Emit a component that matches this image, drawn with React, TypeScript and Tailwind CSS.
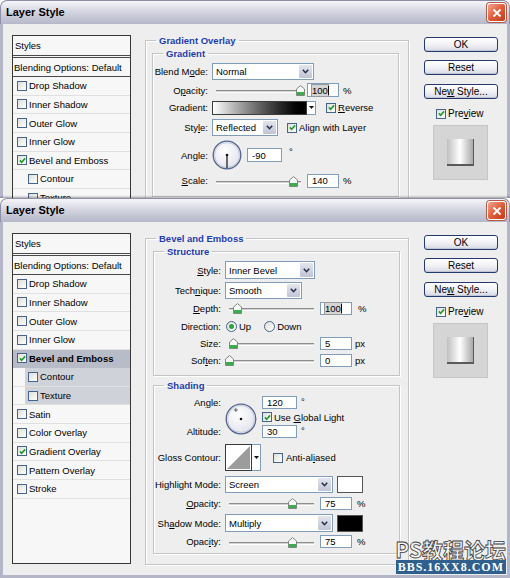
import { clsx } from 'clsx';
import type { ReactNode } from 'react';

const EFFECTS: { name: string; on?: boolean; sub?: boolean }[] = [
    { name: 'Drop Shadow' },
    { name: 'Inner Shadow' },
    { name: 'Outer Glow' },
    { name: 'Inner Glow' },
    { name: 'Bevel and Emboss', on: true },
    { name: 'Contour', sub: true },
    { name: 'Texture', sub: true },
    { name: 'Satin' },
    { name: 'Color Overlay' },
    { name: 'Gradient Overlay', on: true },
    { name: 'Pattern Overlay' },
    { name: 'Stroke' },
];

// label text with the keyboard accelerator underlined
function Acc({ text, at }: { text: string; at: number }) {
    return (
        <>
            {text.slice(0, at)}
            <span className="underline underline-offset-[1px]">{text[at]}</span>
            {text.slice(at + 1)}
        </>
    );
}

function Check({ on }: { on?: boolean }) {
    return (
        <span className="w-[10px] h-[10px] shrink-0 border border-[#46648a] bg-gradient-to-br from-[#dedfd8] to-white flex items-center justify-center">
            {on && (
                <svg viewBox="0 0 8 8" className="w-[7px] h-[7px]">
                    <path d="M1 3.9 L3 6 L7 1.6" fill="none" stroke="#1e9c2b" strokeWidth="1.8" />
                </svg>
            )}
        </span>
    );
}

function Radio({ on }: { on?: boolean }) {
    return (
        <span className="w-[11px] h-[11px] shrink-0 rounded-full border border-[#46648a] bg-gradient-to-br from-[#dedfd8] to-white flex items-center justify-center">
            {on && <span className="w-[5px] h-[5px] rounded-full bg-[#2ba63d]" />}
        </span>
    );
}

function Chevron() {
    return (
        <span className="w-[13px] my-[1px] mr-[1px] rounded-[1px] bg-gradient-to-b from-[#e3e5ee] to-[#c0c4d6] flex items-center justify-center">
            <svg viewBox="0 0 7 5" className="w-[7px] h-[5px]">
                <path d="M0.8 0.8 L3.5 3.7 L6.2 0.8" fill="none" stroke="#283048" strokeWidth="1.6" />
            </svg>
        </span>
    );
}

function Select({ value, w, h = 'h-full' }: { value: string; w: string; h?: string }) {
    return (
        <div className={clsx('flex border border-[#7f9db9] bg-white', w, h)}>
            <span className="flex-1 pl-[3px] flex items-center">{value}</span>
            <Chevron />
        </div>
    );
}

function Field({ value, w = 'w-[32px]', h = 'h-[14px]', caret }: { value: string; w?: string; h?: string; caret?: boolean }) {
    return (
        <div className={clsx('shrink-0 border border-[#7f9db9] bg-white pl-[4px] flex items-center', w, h)}>
            {caret ? (
                <>
                    <span className="bg-[#d4d4d4] outline outline-1 outline-[#9a9a9a]">{value}</span>
                    <span className="w-[1px] h-[9px] bg-black" />
                </>
            ) : (
                value
            )}
        </div>
    );
}

function Slider({ w, at }: { w: string; at: number }) {
    return (
        <div className={clsx('relative h-full shrink-0', w)}>
            <div className="absolute left-[4px] right-[4px] top-1/2 h-[3px] border-t border-[#8e8e8e] border-b border-b-white bg-[#d2d2d2]" />
            <svg className="absolute top-[calc(50%-5px)] w-[9px] h-[11px]" style={{ left: at - 4.5 }} viewBox="0 0 9 11">
                <path d="M0.5 4 L4.5 0.6 L8.5 4 V10.5 H0.5 Z" fill="#f8f8f8" stroke="#6f7d72" strokeWidth="0.9" />
                <rect x="1" y="7" width="7" height="3" fill="#3aae4d" />
            </svg>
        </div>
    );
}

function Row({ label, lw, className, children }: { label: ReactNode; lw: string; className: string; children?: ReactNode }) {
    return (
        <div className={clsx('flex items-center', className)}>
            <span className={clsx('shrink-0 text-right pr-[4px] whitespace-nowrap', lw)}>{label}</span>
            {children}
        </div>
    );
}

function Group({ title, className, children }: { title: string; className?: string; children: ReactNode }) {
    return (
        <fieldset className={clsx('border border-[#c4c4c4] shadow-[inset_1px_1px_0_#fff,1px_1px_0_#fff]', className)}>
            <legend className="ml-[10px] px-[3px] text-[9.5px] leading-[11px] font-bold text-[#1d3cae]">{title}</legend>
            {children}
        </fieldset>
    );
}

function Dial({ size, line, cross }: { size: number; line?: boolean; cross?: boolean }) {
    const c = size / 2;
    const r = c - 1.2;
    const cx = c - 0.35 * r;
    const cy = c - 0.61 * r;
    return (
        <svg width={size} height={size} viewBox={`0 0 ${size} ${size}`} className="shrink-0">
            <defs>
                <radialGradient id={`dial${size}`} cx="40%" cy="35%" r="70%">
                    <stop offset="0" stopColor="#ffffff" />
                    <stop offset="1" stopColor="#e1e3ec" />
                </radialGradient>
            </defs>
            <circle cx={c} cy={c} r={r} fill={`url(#dial${size})`} stroke="#55648a" strokeWidth="1.3" />
            <circle cx={c} cy={c} r={r - 1.4} fill="none" stroke="#bcc3d8" strokeWidth="0.8" />
            {line && <line x1={c} y1={c} x2={c} y2={size - 2} stroke="#111" strokeWidth="1.2" />}
            <circle cx={c} cy={c} r="1.3" fill="#111" />
            {cross && (
                <path d={`M${cx - 2} ${cy} H${cx + 2} M${cx} ${cy - 2} V${cy + 2}`} stroke="#444" strokeWidth="0.8" />
            )}
        </svg>
    );
}

function DropPiece({ h }: { h: string }) {
    return (
        <span className={clsx('w-[9px] shrink-0 border border-l-0 border-[#7f9db9] bg-white flex items-center justify-center', h)}>
            <svg viewBox="0 0 5 3" className="w-[5px] h-[3px]">
                <path d="M0 0 H5 L2.5 3 Z" fill="#111" />
            </svg>
        </span>
    );
}

function Btn({ children, className }: { children: ReactNode; className?: string }) {
    return (
        <div className={clsx('h-[15px] rounded-[3px] border border-[#25396c] bg-gradient-to-b from-white via-[#f2f2f6] to-[#d6d8e4] shadow-[inset_0_-1px_0_#c2c5d6] flex items-center justify-center text-[10px]', className)}>
            {children}
        </div>
    );
}

function Buttons() {
    return (
        <div className="ml-[15px] w-[74px] shrink-0 flex flex-col">
            <Btn className="mt-[1.5px]">OK</Btn>
            <Btn className="mt-[8.5px]">Reset</Btn>
            <Btn className="mt-[8.5px]">
                <span>
                    Ne<span className="underline">w</span> Style...
                </span>
            </Btn>
            <div className="mt-[9.5px] ml-[12px] flex items-center gap-[2px] text-[10px] leading-[11px]">
                <Check on />
                <span>
                    Pre<span className="underline">v</span>iew
                </span>
            </div>
            <div className="mt-[6px] ml-[9px] w-[55px] h-[55px] border border-[#c6c6c6] bg-[#d5d5d5] flex items-center justify-center">
                <div className="w-[27px] h-[27px] bg-gradient-to-r from-[#c0c0c0] via-white to-[#a9a9a9] border-b-2 border-r border-[#5a5a5a]" />
            </div>
        </div>
    );
}

function StylesPanel({ bevelActive }: { bevelActive: boolean }) {
    return (
        <div className="w-[119px] h-[331px] shrink-0 border border-[#383838] bg-[#f7f7f7] flex flex-col">
            <div className="h-[19px] shrink-0 flex items-center pl-[2px]">Styles</div>
            <div className="h-[3px] shrink-0 border-y border-[#4a4a4a]" />
            <div className="h-[19px] shrink-0 flex items-center pl-[1px] border-b border-[#4a4a4a] whitespace-nowrap">Blending Options: Default</div>
            {EFFECTS.map(e => {
                const hl = bevelActive && e.name === 'Bevel and Emboss';
                return (
                    <div
                        key={e.name}
                        className={clsx('h-[18.64px] shrink-0 border-b flex', hl ? 'bg-[#b8bcc8] border-[#b8bcc8] font-bold' : 'border-[#e0e0e0]')}
                    >
                        <div
                            className={clsx(
                                'flex-1 flex items-center gap-[2px]',
                                e.sub ? 'ml-[12px] pl-[3px]' : 'pl-[4px]',
                                bevelActive && e.sub && 'bg-[#d0d2d9]'
                            )}
                        >
                            <Check on={e.on} />
                            <span>{e.name}</span>
                        </div>
                    </div>
                );
            })}
        </div>
    );
}

function Dialog({ children, className }: { children: ReactNode; className?: string }) {
    return (
        <div className={clsx('flex flex-col', className)}>
            <div className="h-[24px] shrink-0 rounded-t-[7px] border border-b-0 border-[#8d8ea6] bg-gradient-to-b from-[#f6f6f9] via-[#d2d3df] to-[#b6b7c9] flex items-center justify-between pl-[5px] pr-[3px]">
                <span className="text-[11px] font-bold">Layer Style</span>
                <span className="w-[19px] h-[19px] rounded-[3px] border border-white bg-gradient-to-br from-[#f3a48d] via-[#df5e3c] to-[#c4391b] shadow-[0_0_0_1px_#b35a48] flex items-center justify-center">
                    <svg viewBox="0 0 10 10" className="w-[10px] h-[10px]">
                        <path d="M1.5 1.5 L8.5 8.5 M8.5 1.5 L1.5 8.5" stroke="white" strokeWidth="1.8" />
                    </svg>
                </span>
            </div>
            <div className="flex-1 flex items-start border-x-[3px] border-b-[3px] border-[#b4b5c7] bg-[#eeeeee] pl-[9px] pt-[11px]">
                {children}
            </div>
        </div>
    );
}

function GradientOverlayDialog() {
    const lw = 'w-[59px]';
    return (
        <Dialog className="h-[380px]">
            <StylesPanel bevelActive={false} />
            <Group title="Gradient Overlay" className="ml-[14px] w-[264px] shrink-0 pb-[10px]">
                <Group title="Gradient" className="ml-[6px] mr-[9px] mt-[2px] pb-[8px]">
                    <Row label={<Acc text="Blend Mode:" at={7} />} lw={lw} className="h-[17px] mt-[4px]">
                        <Select value="Normal" w="w-[102px]" />
                    </Row>
                    <Row label={<Acc text="Opacity:" at={1} />} lw={lw} className="h-[18px] mt-[1px]">
                        <Slider w="w-[93px]" at={88} />
                        <div className="ml-[2px]">
                            <Field value="100" caret />
                        </div>
                        <span className="ml-[4px]">%</span>
                    </Row>
                    <Row label="Gradient:" lw={lw} className="h-[17px]">
                        <div className="w-[95px] h-[14px] border border-[#3c3c3c] bg-gradient-to-r from-white to-black" />
                        <DropPiece h="h-[14px]" />
                        <span className="ml-[10px]">
                            <Check on />
                        </span>
                        <span className="ml-[2px]">
                            <Acc text="Reverse" at={0} />
                        </span>
                    </Row>
                    <Row label={<Acc text="Style:" at={3} />} lw={lw} className="h-[17px] mt-[3px]">
                        <Select value="Reflected" w="w-[66px]" />
                        <span className="ml-[9px]">
                            <Check on />
                        </span>
                        <span className="ml-[2px]">Align with Layer</span>
                    </Row>
                    <Row label={<Acc text="Angle:" at={2} />} lw={lw} className="h-[30px] mt-[4px]">
                        <Dial size={30} line />
                        <div className="ml-[5px]">
                            <Field value="-90" w="w-[35px]" />
                        </div>
                        <span className="ml-[7px] self-start mt-[6px]">°</span>
                    </Row>
                    <Row label={<Acc text="Scale:" at={0} />} lw={lw} className="h-[15px] mt-[3px]">
                        <Slider w="w-[93px]" at={81} />
                        <div className="ml-[2px]">
                            <Field value="140" />
                        </div>
                        <span className="ml-[4px]">%</span>
                    </Row>
                </Group>
            </Group>
            <Buttons />
        </Dialog>
    );
}

function BevelDialog() {
    const lw = 'w-[71px]';
    return (
        <Dialog className="h-[380px] relative z-10 shadow-[0_-1px_2px_rgba(0,0,0,0.35)]">
            <StylesPanel bevelActive />
            <Group title="Bevel and Emboss" className="ml-[14px] w-[264px] shrink-0 pb-[10px]">
                <Group title="Structure" className="ml-[7px] mr-[8px] mt-[1.5px] pb-[8px]">
                    <Row label={<Acc text="Style:" at={0} />} lw={lw} className="h-[18px] mt-[4.5px]">
                        <Select value="Inner Bevel" w="w-[90px]" />
                    </Row>
                    <Row label={<Acc text="Technique:" at={4} />} lw={lw} className="h-[17px] mt-[3px]">
                        <Select value="Smooth" w="w-[77px]" />
                    </Row>
                    <Row label={<Acc text="Depth:" at={0} />} lw={lw} className="h-[14px] mt-[2px]">
                        <Slider w="w-[93px]" at={12} />
                        <div className="ml-[2px]">
                            <Field value="100" h="h-[13px]" caret />
                        </div>
                        <span className="ml-[6px]">%</span>
                    </Row>
                    <Row label="Direction:" lw={lw} className="h-[14px] mt-[4px]">
                        <span className="ml-[1px]">
                            <Radio on />
                        </span>
                        <span className="ml-[2px]">Up</span>
                        <span className="ml-[13px]">
                            <Radio />
                        </span>
                        <span className="ml-[2px]">Down</span>
                    </Row>
                    <Row label="Size:" lw={lw} className="h-[14px] mt-[3px]">
                        <Slider w="w-[93px]" at={8} />
                        <div className="ml-[2px]">
                            <Field value="5" h="h-[13px]" />
                        </div>
                        <span className="ml-[3px]">px</span>
                    </Row>
                    <Row label={<Acc text="Soften:" at={3} />} lw={lw} className="h-[14px] mt-[3px]">
                        <Slider w="w-[93px]" at={4} />
                        <div className="ml-[2px]">
                            <Field value="0" h="h-[13px]" />
                        </div>
                        <span className="ml-[3px]">px</span>
                    </Row>
                </Group>
                <Group title="Shading" className="ml-[7px] mr-[8px] mt-[3.5px] pb-[5px]">
                    <div className="flex h-[42px] mt-[5.5px]">
                        <div className={clsx('shrink-0 flex flex-col justify-between items-end pr-[4px] py-[1px]', lw)}>
                            <span>
                                <Acc text="Angle:" at={2} />
                            </span>
                            <span>Altitude:</span>
                        </div>
                        <div className="mt-[7px]">
                            <Dial size={32} cross />
                        </div>
                        <div className="ml-[5px] flex flex-col justify-between">
                            <div className="flex">
                                <Field value="120" w="w-[35px]" h="h-[13px]" />
                                <span className="ml-[4px]">°</span>
                            </div>
                            <div className="flex items-center gap-[2px]">
                                <Check on />
                                <span>
                                    Use <Acc text="Global" at={0} /> Light
                                </span>
                            </div>
                            <div className="flex">
                                <Field value="30" w="w-[35px]" h="h-[13px]" />
                                <span className="ml-[4px]">°</span>
                            </div>
                        </div>
                    </div>
                    <Row label="Gloss Contour:" lw={lw} className="h-[27px] mt-[6px]">
                        <div className="w-[27px] h-[27px] border border-[#3a3a3a] bg-white p-[1px]">
                            <svg viewBox="0 0 24 24" className="w-full h-full">
                                <path d="M0 24 L24 0 V24 Z" fill="#9c9c9c" />
                            </svg>
                        </div>
                        <DropPiece h="h-[27px]" />
                        <span className="ml-[12px]">
                            <Check />
                        </span>
                        <span className="ml-[3px]">
                            <Acc text="Anti-aliased" at={7} />
                        </span>
                    </Row>
                    <Row label="Highlight Mode:" lw={lw} className="h-[17px] mt-[5px]">
                        <Select value="Screen" w="w-[108px]" />
                        <div className="ml-[4px] w-[26px] h-[17px] border border-[#555] bg-white" />
                    </Row>
                    <Row label={<Acc text="Opacity:" at={0} />} lw={lw} className="h-[13px] mt-[3.5px]">
                        <Slider w="w-[93px]" at={67} />
                        <div className="ml-[2px]">
                            <Field value="75" h="h-[13px]" />
                        </div>
                        <span className="ml-[5px]">%</span>
                    </Row>
                    <Row label={<Acc text="Shadow Mode:" at={2} />} lw={lw} className="h-[18px] mt-[4.5px]">
                        <Select value="Multiply" w="w-[108px]" />
                        <div className="ml-[4px] w-[26px] h-[17px] border border-[#555] bg-black" />
                    </Row>
                    <Row label={<Acc text="Opacity:" at={4} />} lw={lw} className="h-[13px] mt-[3px]">
                        <Slider w="w-[93px]" at={67} />
                        <div className="ml-[2px]">
                            <Field value="75" h="h-[13px]" />
                        </div>
                        <span className="ml-[5px]">%</span>
                    </Row>
                </Group>
            </Group>
            <Buttons />
        </Dialog>
    );
}

export default function App() {
    return (
        <div className="relative w-[510px] h-[578px] overflow-hidden bg-white text-[9.5px] leading-[11px] text-black [font-family:'Liberation_Sans',Arial,sans-serif]">
            <div className="h-[198px] overflow-hidden">
                <GradientOverlayDialog />
            </div>
            <BevelDialog />

            {/* forum watermark */}
            <div className="absolute right-[4px] bottom-[4px] z-20 flex flex-col items-end">
                <span className="text-[21px] leading-[20px] font-bold text-[#f4f4f4] [-webkit-text-stroke:0.8px_#3c3c3c] [font-family:'Noto_Sans_CJK_SC',sans-serif]">
                    PS教程论坛
                </span>
                <span className="mt-[1px] px-[2px] h-[14px] bg-[#2f5f8c] text-white text-[12px] leading-[14px] font-bold tracking-[1px] [font-family:'Liberation_Serif',serif]">
                    BBS.16XX8.COM
                </span>
            </div>
        </div>
    );
}
